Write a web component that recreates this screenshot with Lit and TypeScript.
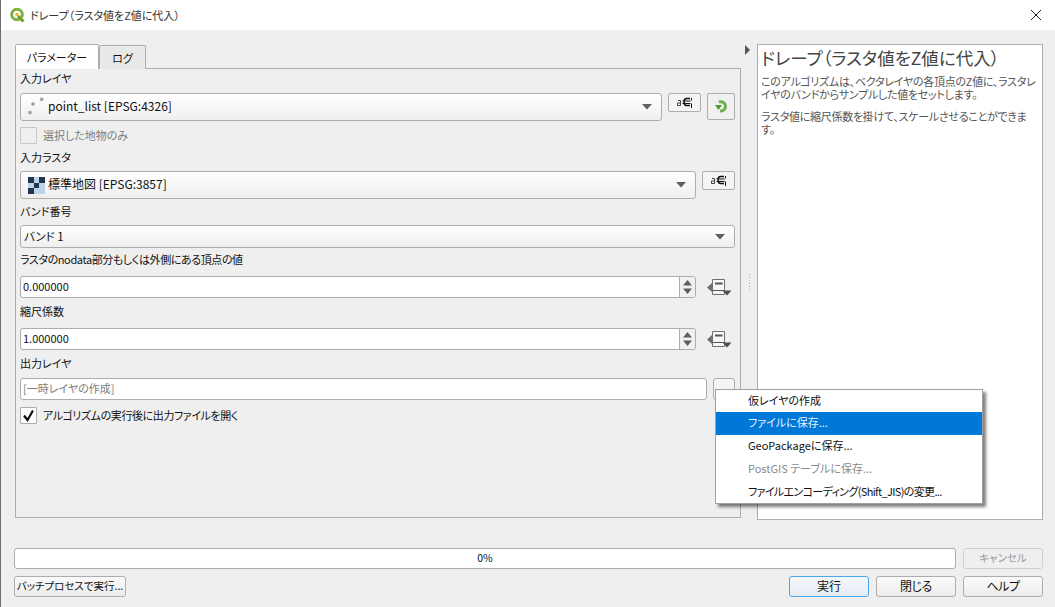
import { LitElement, html, css } from 'lit';
import { customElement } from 'lit/decorators.js';

const exprIcon = html`<svg width="17" height="11" viewBox="0 0 17 11">
  <path d="M2 3.500h2.500v5M1.500 6h3M1.500 6v2.500h3" fill="none" stroke="#444" stroke-width="1"/>
  <path d="M14 1.500h-3.500q-2.500 0-2.500 3.500t2.500 3.500h3.500" fill="none" stroke="#111" stroke-width="1.400"/>
  <path d="M6.500 4h8M6.500 6.500h8M15.500 1v2.500M15.500 6.500v4.500" fill="none" stroke="#111" stroke-width="1"/>
</svg>`;

const arrow = html`<svg class="arrow" width="10" height="6" viewBox="0 0 10 6"><path d="M0 0h10L5 5.500z" fill="#5f5f5f"/></svg>`;

const overrideIcon = html`<svg width="25" height="22" viewBox="0 0 25 22">
  <path d="M0 11.500L5.500 6.500v10z" fill="#6f6f6f"/>
  <path d="M5.500 3.500h12v15h-12z" fill="#f6f6f6" stroke="#6f6f6f"/>
  <path d="M8 7.500h7.500" stroke="#555" stroke-width="2"/>
  <path d="M6 14.500h11" stroke="#555" stroke-width="1"/>
  <path d="M15.500 14.500h9l-4.500 5z" fill="#4d4d4d"/>
</svg>`;

const spinArrows = html`<svg width="11" height="18" viewBox="0 0 11 18">
  <path d="M1 7.500L5.500 2l4.500 5.500z" fill="#5f5f5f"/><path d="M1 10.500h9L5.500 16z" fill="#5f5f5f"/>
</svg>`;

const qgisLogo = html`<svg width="17" height="17" viewBox="0 0 17 17">
  <circle cx="8" cy="7.500" r="5.300" fill="none" stroke="#7fb03f" stroke-width="3"/>
  <path d="M9 9l5.500 5.500" stroke="#6f9f35" stroke-width="3"/>
  <path d="M6.500 6h3v3h-3z" fill="#e9b23a"/>
</svg>`;

const rasterIcon = html`<svg width="17" height="17" viewBox="0 0 17 17" shape-rendering="crispEdges">
  <rect width="17" height="17" fill="#bcd3ea"/>
  <path d="M0 0h6v6H0zM11 0h6v6h-6zM6 6h5v5H6zM0 11h6v6H0z" fill="#1f3550"/>
</svg>`;

@customElement('app-root')
export class AppRoot extends LitElement {
  static styles = css`
    :host {
      display: block;
      position: relative;
      width: 1055px;
      height: 607px;
      overflow: hidden;
      background: #efefef;
      color: #111;
      font: 11px/14px "Noto Sans CJK JP", "Liberation Sans", sans-serif;
      font-feature-settings: "palt";
      border-left: 1px solid #6d6d6d;
      box-sizing: border-box;
    }
    .tight { letter-spacing: -0.4px; }
    .tighter { letter-spacing: -0.65px; }
    .title {
      height: 30px;
      background: #fff;
      display: flex;
      align-items: center;
      padding-left: 8px;
      gap: 4px;
      color: #333;
    }
    .title .close {
      margin-left: auto;
      margin-right: 13px;
      display: flex;
    }
    .main {
      display: flex;
      height: 495px;
      padding: 14px 12px 0 14px;
      box-sizing: border-box;
    }
    .left {
      width: 726px;
      flex: none;
      display: flex;
      flex-direction: column;
    }
    .tabs {
      display: flex;
      height: 25px;
      align-items: flex-end;
      margin-bottom: -1px;
      position: relative;
    }
    .tab {
      border: 1px solid #adadad;
      border-bottom: 0;
      border-radius: 2px 2px 0 0;
      display: flex;
      align-items: center;
      justify-content: center;
      box-sizing: border-box;
    }
    .tab.on {
      width: 84px;
      height: 25px;
      background: #fff;
    }
    .tab.off {
      width: 47px;
      height: 24px;
      background: #e9e9e9;
    }
    .panel {
      width: 726px;
      height: 450px;
      box-sizing: border-box;
      border: 1px solid #adadad;
      padding: 3px 5px 0 4px;
      display: flex;
      flex-direction: column;
    }
    .label {
      height: 14px;
      line-height: 12px;
      white-space: nowrap;
    }
    .row {
      display: flex;
      gap: 6px;
      align-items: flex-start;
    }
    .mt5 { margin-top: 5px; }
    .mt6 { margin-top: 6px; }
    .mt7 { margin-top: 7px; }
    .mt9 { margin-top: 9px; }
    .txt { margin-top: -2px; }
    .combo, .edit, .spin {
      flex: 1;
      box-sizing: border-box;
      border: 1px solid #adadad;
      border-radius: 3px;
      display: flex;
      align-items: center;
    }
    .combo {
      height: 28px;
      padding: 0 9px 0 7px;
      background: linear-gradient(#fff, #efefef);
      gap: 3px;
      font-size: 12px;
    }
    .combo.low {
      height: 23px;
      padding-left: 3px;
      font-size: 11.500px;
    }
    .combo .arrow { margin-left: auto; }
    .points { width: 17px; height: 20px; flex: none; }
    .tool {
      box-sizing: border-box;
      width: 33px;
      height: 19px;
      border: 1px solid #adadad;
      border-radius: 2px;
      background: #f4f4f4;
      display: flex;
      align-items: center;
      justify-content: center;
      flex: none;
    }
    .reload {
      box-sizing: border-box;
      width: 28px;
      height: 27px;
      border: 1px solid #adadad;
      border-radius: 2px;
      background: #f0f0f0;
      display: flex;
      align-items: center;
      justify-content: center;
      flex: none;
    }
    .spin {
      height: 22px;
      background: #fff;
      padding-left: 2px;
    }
    .spin .buttons {
      margin-left: auto;
      width: 16px;
      height: 100%;
      box-sizing: border-box;
      border-left: 1px solid #adadad;
      background: #f0f0f0;
      border-radius: 0 3px 3px 0;
      display: flex;
      align-items: center;
      justify-content: center;
    }
    .override {
      width: 25px;
      margin: 0 3px 0 5px;
      flex: none;
      display: flex;
    }
    .edit {
      height: 22px;
      background: #fff;
      padding-left: 2px;
      color: #7d7d7d;
    }
    .dots {
      box-sizing: border-box;
      width: 22px;
      height: 22px;
      border: 1px solid #adadad;
      border-radius: 3px;
      background: #f4f4f4;
      flex: none;
    }
    .check {
      display: flex;
      align-items: center;
      gap: 6px;
      height: 17px;
    }
    .box {
      box-sizing: border-box;
      width: 17px;
      height: 17px;
      border: 1px solid #adadad;
      border-radius: 1px;
      background: #fff;
      display: flex;
      align-items: center;
      justify-content: center;
    }
    .check.off { color: #7d7d7d; }
    .check.off .box { background: #efefef; border-color: #c8c8c8; }
    .splitter {
      width: 16px;
      flex: none;
    }
    .splitter .tri {
      margin: 1px 0 0 4px;
      width: 0;
      height: 0;
      border-left: 5px solid #555;
      border-top: 5px solid transparent;
      border-bottom: 5px solid transparent;
    }
    .splitter .grip {
      margin: 219px 0 0 8px;
      width: 1px;
      height: 17px;
      background: repeating-linear-gradient(#a8a8a8 0 1px, transparent 1px 3px);
    }
    .help {
      width: 286px;
      height: 476px;
      flex: none;
      box-sizing: border-box;
      border: 1px solid #adadad;
      background: #fff;
      padding: 2px 3px;
      color: #555;
      font-size: 11px;
      line-height: 13px;
    }
    .help h1 {
      margin: 0 0 6px;
      font-size: 17.500px;
      line-height: 22px;
      font-weight: 400;
      white-space: nowrap;
      color: #444;
    }
    .help p {
      margin: 0 0 9px;
      white-space: nowrap;
      letter-spacing: -0.27px;
    }
    .progress-row {
      display: flex;
      gap: 7px;
      padding: 23px 12px 0 13px;
    }
    .progress {
      width: 942px;
      height: 21px;
      box-sizing: border-box;
      border: 1px solid #adadad;
      border-radius: 3px;
      background: #fff;
      text-align: center;
      line-height: 18px;
      font-size: 10.500px;
    }
    .btn {
      box-sizing: border-box;
      width: 80px;
      height: 21px;
      padding-bottom: 2px;
      border: 1px solid #adadad;
      border-radius: 3px;
      background: linear-gradient(#fafafa, #ececec);
      display: flex;
      align-items: center;
      justify-content: center;
      flex: none;
      font-size: 12px;
      letter-spacing: -0.4px;
    }
    .btn.disabled {
      color: #9a9a9a;
      border-color: #d0d0d0;
      background: #efefef;
      font-size: 10.500px;
      letter-spacing: 0;
    }
    .btn.primary {
      border-color: #4aa8f0;
      background: linear-gradient(#f5f8fb, #e6edf3);
      letter-spacing: 0;
    }
    .btn.batch {
      width: 112px;
      white-space: nowrap;
      font-size: 10.500px;
      letter-spacing: 0;
    }
    .button-row {
      display: flex;
      gap: 7px;
      padding: 7px 12px 0 13px;
    }
    .button-row .spacer { flex: 1; }
    .menu {
      position: absolute;
      left: 714px;
      top: 389px;
      width: 268px;
      box-sizing: border-box;
      border: 1px solid #a0a0a0;
      background: #fff;
      box-shadow: 3px 3px 3px rgba(0, 0, 0, 0.5);
    }
    .menu div {
      height: 23px;
      line-height: 20px;
      padding-left: 32px;
      box-sizing: border-box;
      white-space: nowrap;
    }
    .menu div:first-child, .menu div:last-child { height: 22px; }
    .menu .sel {
      background: #0078d7;
      color: #e8f2fb;
    }
    .menu .dis { color: #8a8a8a; }
  `;

  render() {
    return html`
      <div class="title">
        ${qgisLogo}
        <span>ドレープ（ラスタ値をZ値に代入）</span>
        <span class="close">
          <svg width="12" height="12" viewBox="0 0 12 12"><path d="M1 1l10 10M11 1L1 11" stroke="#222" fill="none"/></svg>
        </span>
      </div>
      <div class="main">
        <div class="left">
          <div class="tabs">
            <div class="tab on">パラメーター</div>
            <div class="tab off">ログ</div>
          </div>
          <div class="panel">
            <div class="label">入力レイヤ</div>
            <div class="row mt7">
              <div class="combo">
                <svg class="points" viewBox="0 0 17 20">
                  <circle cx="2" cy="15.600" r="1.500" fill="#a5a5a5" stroke="#888" stroke-width="0.500"/>
                  <circle cx="5" cy="7" r="1.500" fill="#a5a5a5" stroke="#888" stroke-width="0.500"/>
                  <circle cx="13.700" cy="2.300" r="1.500" fill="#a5a5a5" stroke="#888" stroke-width="0.500"/>
                </svg>
                <span class="txt">point_list [EPSG:4326]</span>
                ${arrow}
              </div>
              <div class="tool">${exprIcon}</div>
              <div class="reload">
                <svg width="13" height="15" viewBox="0 0 13 15">
                  <path d="M4 3A4.700 4.700 0 1 1 5 12" fill="none" stroke="#6bb04a" stroke-width="3"/>
                  <path d="M0 6h7L3.500 11z" fill="#4f9a30"/>
                </svg>
              </div>
            </div>
            <div class="check off mt6">
              <span class="box"></span><span class="txt">選択した地物のみ</span>
            </div>
            <div class="label mt7">入力ラスタ</div>
            <div class="row mt6">
              <div class="combo">
                ${rasterIcon}
                <span class="txt">標準地図 [EPSG:3857]</span>
                ${arrow}
              </div>
              <div class="tool">${exprIcon}</div>
            </div>
            <div class="label mt6">バンド番号</div>
            <div class="row mt6">
              <div class="combo low"><span class="txt">バンド 1</span> ${arrow}</div>
            </div>
            <div class="label tight mt5">ラスタのnodata部分もしくは外側にある頂点の値</div>
            <div class="row mt9">
              <div class="spin"><span class="txt">0.000000</span><div class="buttons">${spinArrows}</div></div>
              <div class="override">${overrideIcon}</div>
            </div>
            <div class="label mt7">縮尺係数</div>
            <div class="row mt9">
              <div class="spin"><span class="txt">1.000000</span><div class="buttons">${spinArrows}</div></div>
              <div class="override">${overrideIcon}</div>
            </div>
            <div class="label mt7">出力レイヤ</div>
            <div class="row mt7">
              <div class="edit"><span class="txt">[一時レイヤの作成]</span></div>
              <div class="dots"></div>
            </div>
            <div class="check tight mt7">
              <span class="box">
                <svg width="13" height="13" viewBox="0 0 13 13"><path d="M2 6.500l3.500 4.500L11 1.500" fill="none" stroke="#111" stroke-width="2.200"/></svg>
              </span>
              <span class="txt">アルゴリズムの実行後に出力ファイルを開く</span>
            </div>
          </div>
        </div>
        <div class="splitter">
          <div class="tri"></div>
          <div class="grip"></div>
        </div>
        <div class="help">
          <h1>ドレープ（ラスタ値をZ値に代入）</h1>
          <p>このアルゴリズムは、ベクタレイヤの各頂点のZ値に、ラスタレ<br />イヤのバンドからサンプルした値をセットします。</p>
          <p>ラスタ値に縮尺係数を掛けて、スケールさせることができま<br />す。</p>
        </div>
      </div>
      <div class="progress-row">
        <div class="progress">0%</div>
        <div class="btn disabled">キャンセル</div>
      </div>
      <div class="button-row">
        <div class="btn batch">バッチプロセスで実行...</div>
        <div class="spacer"></div>
        <div class="btn primary">実行</div>
        <div class="btn">閉じる</div>
        <div class="btn">ヘルプ</div>
      </div>
      <div class="menu">
        <div>仮レイヤの作成</div>
        <div class="sel">ファイルに保存...</div>
        <div>GeoPackageに保存...</div>
        <div class="dis">PostGIS テーブルに保存...</div>
        <div class="tighter">ファイルエンコーディング(Shift_JIS)の変更...</div>
      </div>
    `;
  }
}
